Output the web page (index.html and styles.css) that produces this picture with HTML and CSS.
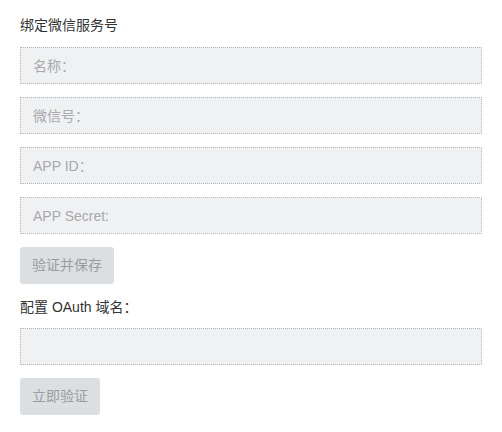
FILE: index.html
```html
<!DOCTYPE html>
<html lang="zh-CN">
<head>
<meta charset="utf-8">
<title>绑定微信服务号</title>
<link rel="stylesheet" href="styles.css">
</head>
<body>
<div class="panel">
  <div class="title">绑定微信服务号</div>
  <div class="field"><input class="input" type="text" placeholder="名称："></div>
  <div class="field"><input class="input" type="text" placeholder="微信号："></div>
  <div class="field"><input class="input" type="text" placeholder="APP ID："></div>
  <div class="field"><input class="input" type="text" placeholder="APP Secret:"></div>
  <button class="btn" type="button">验证并保存</button>
  <div class="label">配置 OAuth 域名：</div>
  <div class="field"><input class="input" type="text"></div>
  <button class="btn" type="button">立即验证</button>
</div>
</body>
</html>
```
FILE: styles.css
```css
* { box-sizing: border-box; }
html, body { margin: 0; padding: 0; background: #fff; }
body {
  font-family: "Liberation Sans", "Noto Sans CJK SC", sans-serif;
  font-size: 14px;
  color: #333;
}
.panel {
  display: flex;
  flex-direction: column;
  align-items: flex-start;
  padding: 15px 20px;
}
.title {
  line-height: 20px;
  margin-bottom: 12px;
}
.field {
  width: 462px;
  margin-bottom: 13px;
}
.input {
  display: block;
  width: 100%;
  height: 37px;
  padding: 0 12px;
  border: 1px dotted #b4b6b9;
  background: #f0f1f3;
  font-family: inherit;
  font-size: 14px;
  color: #333;
  outline: none;
  border-radius: 0;
}
.input::placeholder { color: #a7a9ac; }
.btn {
  height: 37px;
  padding: 0 12px;
  border: none;
  border-radius: 3px;
  background: #dcdfe2;
  color: #9a9c9f;
  font-family: inherit;
  font-size: 14px;
  line-height: 37px;
}
.label {
  line-height: 20px;
  margin-top: 13px;
  margin-bottom: 11px;
}
```
